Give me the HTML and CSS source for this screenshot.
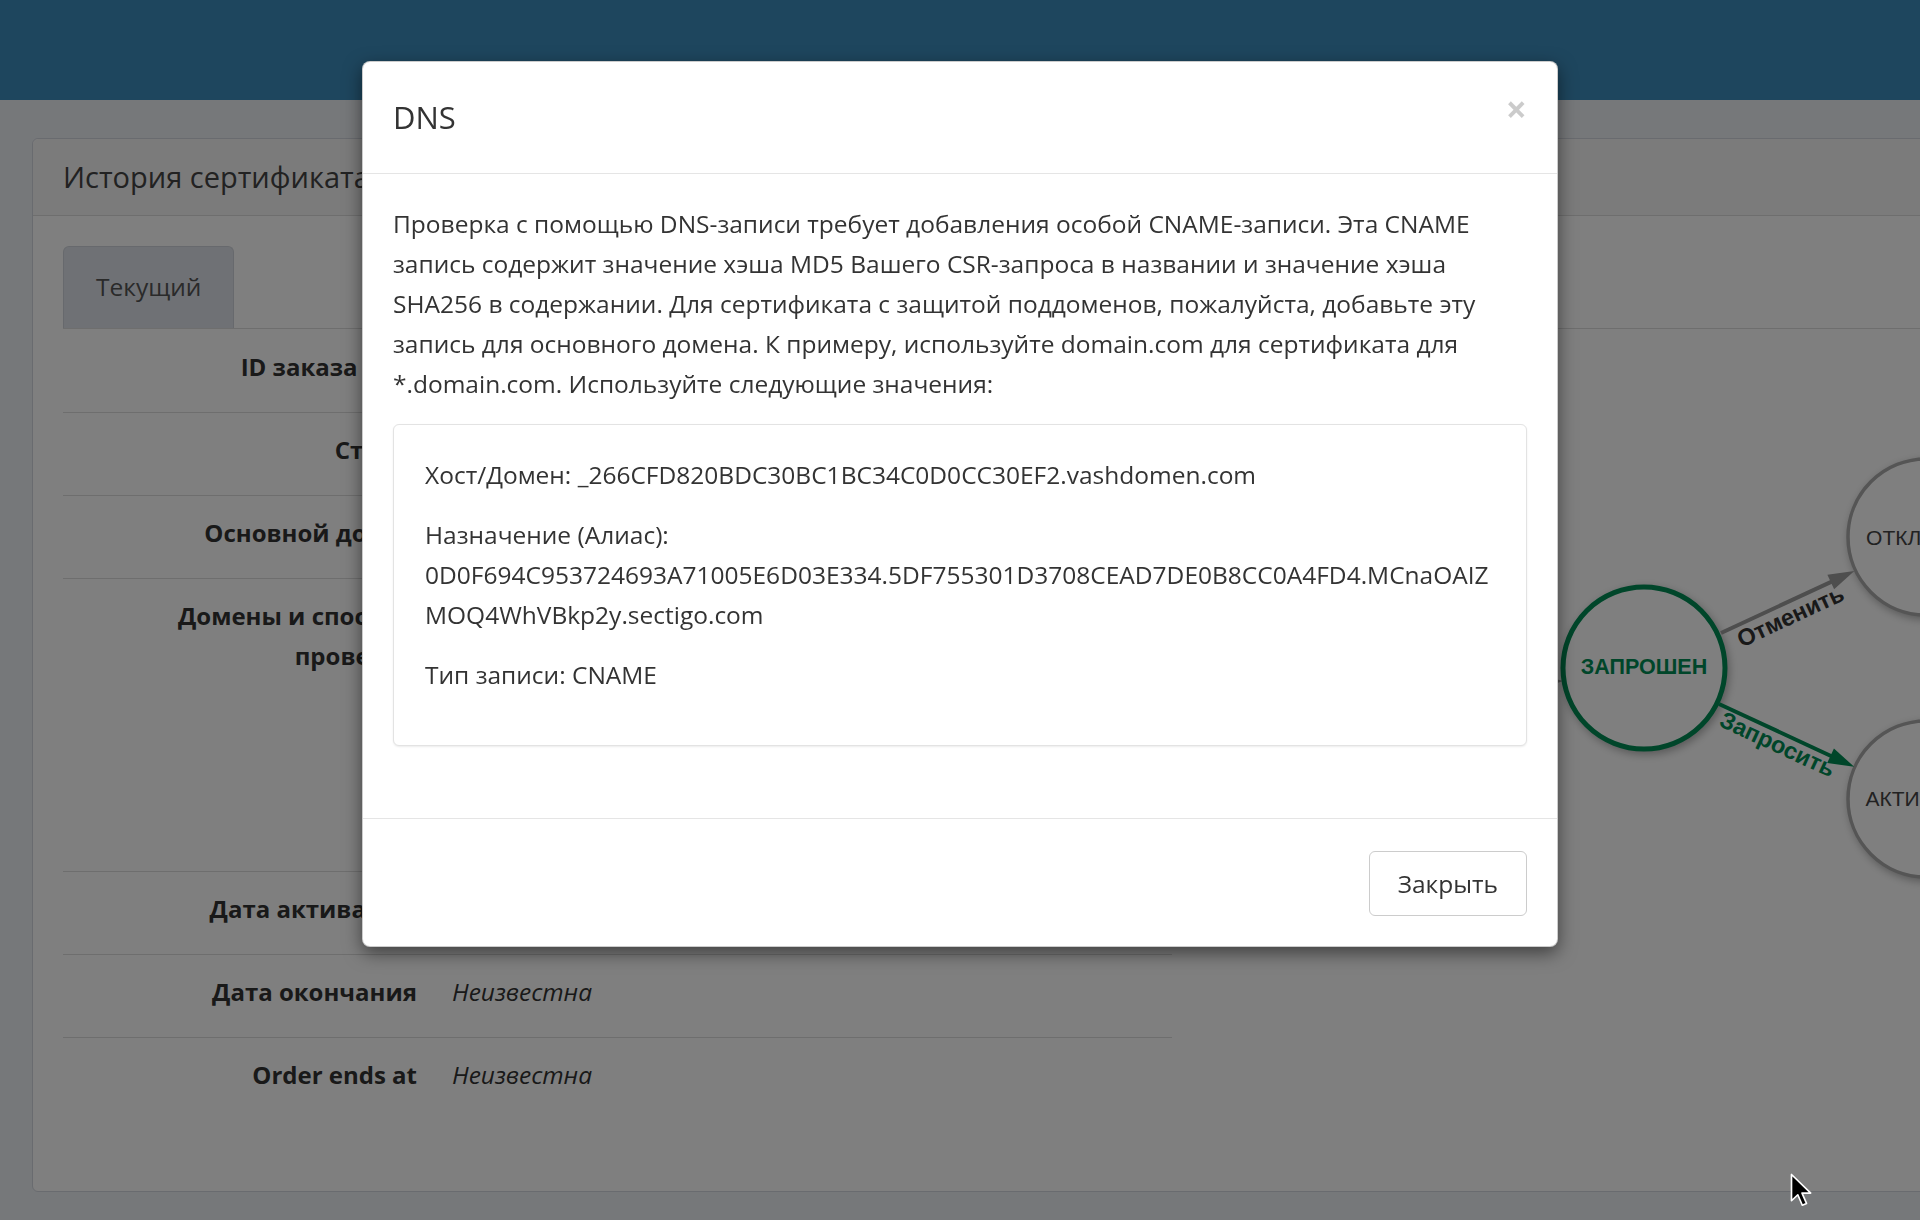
FILE: index.html
```html
<!DOCTYPE html>
<html lang="ru">
<head>
<meta charset="utf-8">
<title>История сертификата — DNS</title>
<link rel="stylesheet" href="styles.css">
</head>
<body>
<header class="topbar"></header>
<main class="content">
  <section class="box">
    <div class="box-header"><h3 class="box-title">История сертификата</h3></div>
    <div class="box-body">
      <ul class="tabs"><li class="tab active">Текущий</li></ul>
      <div class="tab-content">
        <div class="details">
          <div class="row first"><div class="label">ID заказа в CA</div><div class="value">1783520</div></div>
          <div class="row"><div class="label">Статус</div><div class="value">Запрошен</div></div>
          <div class="row"><div class="label">Основной домен</div><div class="value">vashdomen.com</div></div>
          <div class="row"><div class="label">Домены и способы проверки</div><div class="value tall">vashdomen.com — DNS</div></div>
          <div class="row"><div class="label">Дата активации</div><div class="value"><em>Неизвестна</em></div></div>
          <div class="row"><div class="label">Дата окончания</div><div class="value"><em>Неизвестна</em></div></div>
          <div class="row last"><div class="label">Order ends at</div><div class="value"><em>Неизвестна</em></div></div>
        </div>
        <svg class="diagram" width="749" height="600" viewBox="0 0 749 600">
          <g class="edge-in">
            <line x1="250" y1="358" x2="372" y2="352"/>
            <polygon points="365,344 391,351 365,360"/>
          </g>
          <g class="node">
            <circle cx="754" cy="207" r="78"/>
            <text x="752" y="215">ОТКЛОНЕН</text>
          </g>
          <g class="node">
            <circle cx="754" cy="469" r="78"/>
            <text x="752" y="476">АКТИВНЫЙ</text>
          </g>
          <g class="node current">
            <circle cx="472" cy="338" r="81"/>
            <text x="472" y="344">ЗАПРОШЕН</text>
          </g>
          <g class="edge grey" transform="translate(549,303) rotate(-24.9)">
            <line x1="0" y1="0" x2="128" y2="0"/>
            <polygon points="121,-8 147,0 121,8"/>
            <text x="70" y="22">Отменить</text>
          </g>
          <g class="edge green" transform="translate(547,374) rotate(24.9)">
            <line x1="0" y1="0" x2="130" y2="0"/>
            <polygon points="123,-8 149,0 123,8"/>
            <text x="70" y="20">Запросить</text>
          </g>
        </svg>
      </div>
    </div>
  </section>
</main>

<div class="backdrop"></div>

<div class="modal">
  <div class="modal-dialog">
    <div class="modal-content">
      <div class="modal-header">
        <h4 class="modal-title">DNS</h4>
        <button class="close" type="button">×</button>
      </div>
      <div class="modal-body">
        <p>Проверка с помощью DNS-записи требует добавления особой CNAME-записи. Эта CNAME запись содержит значение хэша MD5 Вашего CSR-запроса в названии и значение хэша SHA256 в содержании. Для сертификата с защитой поддоменов, пожалуйста, добавьте эту запись для основного домена. К примеру, используйте domain.com для сертификата для *.domain.com. Используйте следующие значения:</p>
        <div class="well">
          <p>Хост/Домен: _266CFD820BDC30BC1BC34C0D0CC30EF2.vashdomen.com</p>
          <p>Назначение (Алиас): 0D0F694C953724693A71005E6D03E334.5DF755301D3708CEAD7DE0B8CC0A4FD4.MCnaOAIZMOQ4WhVBkp2y.sectigo.com</p>
          <p>Тип записи: CNAME</p>
        </div>
      </div>
      <div class="modal-footer">
        <button class="btn" type="button">Закрыть</button>
      </div>
    </div>
  </div>
</div>

<svg class="cursor" width="24" height="36" viewBox="0 0 16 24">
  <path d="M1 1 L1 18.5 L5.2 14.5 L8.2 21.5 L11 20.3 L8 13.4 L13.8 13.4 Z"/>
</svg>
</body>
</html>
```

FILE: styles.css
```css
html, body {
  margin: 0;
  width: 1920px;
  height: 1220px;
  overflow: hidden;
}

body {
  position: relative;
  background: #ecf0f5;
  color: #333;
  font-family: "Open Sans", "Noto Sans", "DejaVu Sans", sans-serif;
  font-size: 24.5px;
  line-height: 40px;
}

.topbar {
  height: 100px;
  background: #3c8dbc;
}

.content {
  padding: 38px 0 0 32px;
}

.box {
  width: 1920px;
  box-sizing: border-box;
  background: #fff;
  border: 1px solid #d2d6de;
  border-radius: 6px;
}

.box-header {
  height: 76px;
  padding: 0 30px;
  background: #f6f6f6;
  border-bottom: 1px solid #dcdcdc;
  border-radius: 6px 6px 0 0;
}

.box-title {
  margin: 0;
  font-size: 29px;
  font-weight: 400;
  line-height: 76px;
  color: #444;
}

.box-body {
  padding: 30px 30px 30px;
}

.tabs {
  display: flex;
  margin: 0;
  padding: 0;
  list-style: none;
  border-bottom: 1px solid #dcdcdc;
}

.tab {
  padding: 20px 32px 21px;
  background: #dfe3ea;
  border: 1px solid #cfd3da;
  border-bottom: none;
  border-radius: 6px 6px 0 0;
  color: #555;
}

.tab-content {
  display: flex;
  padding-top: 1px;
}

.details {
  flex: none;
  width: 1109px;
  margin-bottom: 41px;
}

.row {
  display: grid;
  grid-template-columns: 354px 1fr;
  column-gap: 35px;
  padding: 17px 0 25px;
  border-bottom: 1px solid #dcdcdc;
}

.row.last {
  border-bottom: none;
}

.label {
  padding-left: 80px;
  text-align: right;
  font-weight: 700;
  font-size: 24px;
}

.value em {
  font-style: italic;
  color: #333;
}

.value.tall {
  min-height: 250px;
}

.diagram {
  flex: none;
  display: block;
}

.node circle {
  fill: #fff;
  stroke: #aaaaaa;
  stroke-width: 3.5;
  filter: drop-shadow(2px 3px 4px rgba(0, 0, 0, 0.3));
}

.node text {
  font-family: "Liberation Sans", Arial, sans-serif;
  font-size: 21px;
  fill: #444;
  text-anchor: middle;
}

.node.current circle {
  stroke: #008c55;
  stroke-width: 5;
}

.node.current text {
  font-size: 21.5px;
  font-weight: 700;
  fill: #008c55;
}

.edge line,
.edge-in line {
  stroke-width: 4;
}

.edge text {
  font-family: "Liberation Sans", Arial, sans-serif;
  font-size: 23.5px;
  font-weight: 700;
  text-anchor: middle;
}

.edge.grey line,
.edge-in line {
  stroke: #9c9c9c;
}

.edge.grey polygon,
.edge-in polygon {
  fill: #9c9c9c;
}

.edge.grey text {
  fill: #333;
}

.edge.green line {
  stroke: #008c55;
}

.edge.green polygon,
.edge.green text {
  fill: #008c55;
}

.backdrop {
  position: fixed;
  inset: 0;
  z-index: 10;
  background: rgba(0, 0, 0, 0.5);
}

.modal {
  position: absolute;
  top: 0;
  left: 0;
  right: 0;
  z-index: 20;
}

.modal-dialog {
  width: 1196px;
  margin: 61px auto 0;
}

.modal-content {
  background: #fff;
  border: 1px solid rgba(0, 0, 0, 0.2);
  border-radius: 8px;
  box-shadow: 0 6px 18px rgba(0, 0, 0, 0.5);
}

.modal-header {
  display: flex;
  justify-content: space-between;
  align-items: flex-start;
  padding: 30px;
  border-bottom: 1px solid #e5e5e5;
}

.modal-title {
  margin: 0;
  font-size: 31px;
  font-weight: 400;
  line-height: 51px;
  color: #333;
}

.close {
  margin: -1px 0 0;
  padding: 0;
  border: 0;
  background: none;
  font-family: "Open Sans", sans-serif;
  font-size: 37px;
  font-weight: 700;
  line-height: 36px;
  color: #000;
  opacity: 0.2;
}

.modal-body {
  padding: 30px;
}

.modal-body p {
  margin: 0 0 20px;
}

.well {
  margin-bottom: 42px;
  padding: 30px 31px 30px;
  border: 1px solid #e3e3e3;
  border-radius: 6px;
  background: #fff;
  box-shadow: 0 1px 2px rgba(0, 0, 0, 0.08);
  overflow-wrap: break-word;
}

.modal-footer {
  padding: 32px 30px 30px;
  border-top: 1px solid #e5e5e5;
  text-align: right;
}

.btn {
  font-family: "Open Sans", sans-serif;
  font-size: 24.5px;
  line-height: 40px;
  padding: 12px 28px 11px;
  color: #333;
  background: #fff;
  border: 1px solid #ccc;
  border-radius: 6px;
}

.cursor {
  position: absolute;
  left: 1790px;
  top: 1173px;
  z-index: 30;
}

.cursor path {
  fill: #000;
  stroke: #fff;
  stroke-width: 1.1;
  stroke-linejoin: round;
}
```
